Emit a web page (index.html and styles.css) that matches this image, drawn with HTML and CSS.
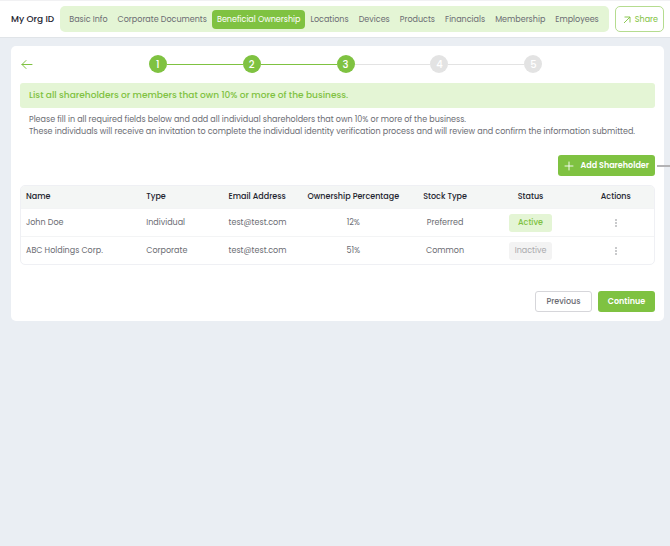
FILE: index.html
```html
<!DOCTYPE html>
<html lang="en">
<head>
    <meta charset="UTF-8">
    <meta name="viewport" content="width=device-width, initial-scale=1.0">
    <title>Beneficial Ownership</title>
    <link rel="stylesheet" href="styles.css">
</head>
<body>
    <header class="topbar">
        <div class="org-name">My Org ID</div>
        <nav class="tabs">
            <a href="#" class="tab">Basic Info</a>
            <a href="#" class="tab">Corporate Documents</a>
            <a href="#" class="tab active" aria-current="page">Beneficial Ownership</a>
            <a href="#" class="tab">Locations</a>
            <a href="#" class="tab">Devices</a>
            <a href="#" class="tab">Products</a>
            <a href="#" class="tab">Financials</a>
            <a href="#" class="tab">Membership</a>
            <a href="#" class="tab">Employees</a>
        </nav>
        <button type="button" class="share-btn">
            <svg width="8" height="8" viewBox="0 0 8 8" fill="none" stroke="currentColor" stroke-width=".9" aria-hidden="true"><path d="M1 7 7 1M1.5 1H7V6.5"/></svg>
            Share
        </button>
    </header>

    <main class="card">
        <div class="steps-row">
            <a href="#" class="back" aria-label="Back">
                <svg width="12" height="10" viewBox="0 0 12 10" fill="none" stroke="currentColor" stroke-linecap="round" stroke-linejoin="round"><path d="M11 5.5H1M5 1.5 1 5.5l4 4"/></svg>
            </a>
            <div class="steps">
                <span class="step done">1</span>
                <span class="line done"></span>
                <span class="step done">2</span>
                <span class="line done"></span>
                <span class="step done">3</span>
                <span class="line"></span>
                <span class="step">4</span>
                <span class="line"></span>
                <span class="step">5</span>
            </div>
        </div>

        <h1 class="banner">List all shareholders or members that own 10% or more of the business.</h1>
        <div class="intro">
            <p>Please fill in all required fields below and add all individual shareholders that own 10% or more of the business.</p>
            <p>These individuals will receive an invitation to complete the individual identity verification process and will review and confirm the information submitted.</p>
        </div>

        <div class="toolbar">
            <button type="button" class="btn btn-primary btn-add">
                <svg width="10" height="10" viewBox="0 0 10 10" fill="none" stroke="currentColor" stroke-width=".9" stroke-linecap="round" aria-hidden="true"><path d="M5 1v8M1 5h8"/></svg>
                Add Shareholder
            </button>
        </div>

        <table class="shareholders">
            <colgroup>
                <col class="col-name">
                <col class="col-type">
                <col class="col-email">
                <col class="col-percent">
                <col class="col-stock">
                <col class="col-status">
                <col class="col-actions">
            </colgroup>
            <thead>
                <tr>
                    <th>Name</th>
                    <th>Type</th>
                    <th>Email Address</th>
                    <th class="center">Ownership Percentage</th>
                    <th class="center">Stock Type</th>
                    <th class="center">Status</th>
                    <th class="center">Actions</th>
                </tr>
            </thead>
            <tbody>
                <tr>
                    <td>John Doe</td>
                    <td>Individual</td>
                    <td>test@test.com</td>
                    <td class="center">12%</td>
                    <td class="center">Preferred</td>
                    <td class="center"><span class="status status-active">Active</span></td>
                    <td class="center">
                        <button type="button" class="more" aria-label="Actions for John Doe">
                            <svg width="4" height="10" viewBox="0 0 4 10" fill="currentColor"><circle cx="2" cy="2" r=".7"/><circle cx="2" cy="5" r=".7"/><circle cx="2" cy="8" r=".7"/></svg>
                        </button>
                    </td>
                </tr>
                <tr>
                    <td>ABC Holdings Corp.</td>
                    <td>Corporate</td>
                    <td>test@test.com</td>
                    <td class="center">51%</td>
                    <td class="center">Common</td>
                    <td class="center"><span class="status">Inactive</span></td>
                    <td class="center">
                        <button type="button" class="more" aria-label="Actions for ABC Holdings Corp.">
                            <svg width="4" height="10" viewBox="0 0 4 10" fill="currentColor"><circle cx="2" cy="2" r=".7"/><circle cx="2" cy="5" r=".7"/><circle cx="2" cy="8" r=".7"/></svg>
                        </button>
                    </td>
                </tr>
            </tbody>
        </table>

        <div class="card-footer">
            <button type="button" class="btn btn-outline">Previous</button>
            <button type="button" class="btn btn-primary">Continue</button>
        </div>
    </main>
</body>
</html>
```

FILE: styles.css
```css
* {
    margin: 0;
    padding: 0;
    box-sizing: border-box;
}

body {
    background-color: #eaeef3;
    color: #6b6c73;
    font-family: Poppins, Inter, sans-serif;
    font-size: 8px;
    line-height: 12px;
}

button {
    font: inherit;
    cursor: pointer;
}

a {
    color: inherit;
    text-decoration: none;
}

svg {
    display: block;
    flex: none;
}

.topbar {
    display: flex;
    align-items: center;
    gap: 6px;
    padding: 5px 6px 5px 11px;
    background-color: white;
    border-top: 1px solid #f1f1f3;
    border-bottom: 1px solid #e0e4e8;
}

.org-name {
    flex: none;
    font-size: 9px;
    font-weight: 500;
    color: #23242f;
    white-space: nowrap;
}

.tabs {
    flex: 1;
    display: flex;
    align-items: center;
    justify-content: space-between;
    height: 26px;
    padding: 0 5px 0 4px;
    background-color: #e4f5d5;
    border-radius: 5px;
}

.tab {
    padding: 4px 5px 3px;
    border-radius: 4px;
    white-space: nowrap;
}

.tab.active {
    background-color: #7fc241;
    color: white;
}

.share-btn {
    flex: none;
    display: flex;
    align-items: center;
    gap: 4px;
    height: 26px;
    padding: 1px 5px 0 7px;
    background-color: white;
    border: 1px solid #b5dc8f;
    border-radius: 5px;
    color: #7fc241;
}

.card {
    margin: 8px 6px 8px 11px;
    padding: 9px;
    background-color: white;
    border-radius: 5px;
}

.steps-row {
    display: flex;
    align-items: center;
    margin-bottom: 10px;
}

.back {
    width: 16px;
    padding-left: 1px;
    color: #7fc241;
}

.steps {
    display: flex;
    align-items: center;
    width: 62%;
    margin: 0 auto;
}

.step {
    flex: none;
    width: 18px;
    height: 18px;
    border-radius: 50%;
    background-color: #e3e3e3;
    color: white;
    font-size: 10px;
    font-weight: 500;
    line-height: 19px;
    text-align: center;
}

.line {
    flex: 1;
    height: 1px;
    background-color: #e3e3e3;
}

.step.done,
.line.done {
    background-color: #7fc241;
}

.banner {
    padding: 0 9px;
    background-color: #e4f5d5;
    border-radius: 3px;
    color: #7fc241;
    font-size: 9px;
    font-weight: 500;
    line-height: 25px;
}

.intro {
    padding: 6px 9px 0;
}

.toolbar {
    display: flex;
    justify-content: flex-end;
    margin: 17px 0 9px;
}

.btn {
    display: flex;
    align-items: center;
    justify-content: center;
    min-width: 57px;
    height: 21px;
    border: 1px solid transparent;
    border-radius: 3px;
    font-weight: 500;
}

.btn-primary {
    background-color: #7fc241;
    color: white;
    font-weight: 600;
}

.btn-outline {
    background-color: white;
    border-color: #d6d6da;
    color: #6b6c73;
}

.btn-add {
    position: relative;
    gap: 7px;
    padding: 0 5px;
}

/* connector running off to the right edge of the page */
.btn-add::after {
    content: "";
    position: absolute;
    top: 9px;
    left: calc(100% + 3px);
    width: 13px;
    height: 2px;
    background-color: #b3b3b5;
}

.shareholders {
    width: 100%;
    table-layout: fixed;
    border: 1px solid #eff0f4;
    border-radius: 5px;
    border-spacing: 0;
    overflow: hidden;
}

.col-name { width: 19%; }
.col-type { width: 13%; }
.col-email { width: 13%; }
.col-percent { width: 15%; }
.col-stock { width: 14%; }
.col-status { width: 13%; }
.col-actions { width: 13%; }

.shareholders th,
.shareholders td {
    height: 28px;
    padding: 0 5px;
    text-align: left;
    white-space: nowrap;
}

.shareholders th {
    height: 22px;
    background-color: #f4f6f5;
    color: #23242f;
    font-weight: 500;
}

.shareholders td {
    border-top: 1px solid #f3f4f5;
}

.shareholders .center {
    padding: 0;
    text-align: center;
}

.shareholders .center:last-child {
    padding-left: 6px;
}

.status {
    display: inline-block;
    width: 43px;
    background-color: #f3f3f3;
    border-radius: 3px;
    color: #a9a9ac;
    line-height: 18px;
}

.status-active {
    background-color: #e4f5d5;
    color: #7fc241;
    font-weight: 500;
}

.more {
    display: inline-block;
    padding: 2px 4px;
    background: none;
    border: none;
    color: #6b6c73;
    vertical-align: middle;
}

.card-footer {
    display: flex;
    justify-content: flex-end;
    gap: 6px;
    margin-top: 26px;
}
```
